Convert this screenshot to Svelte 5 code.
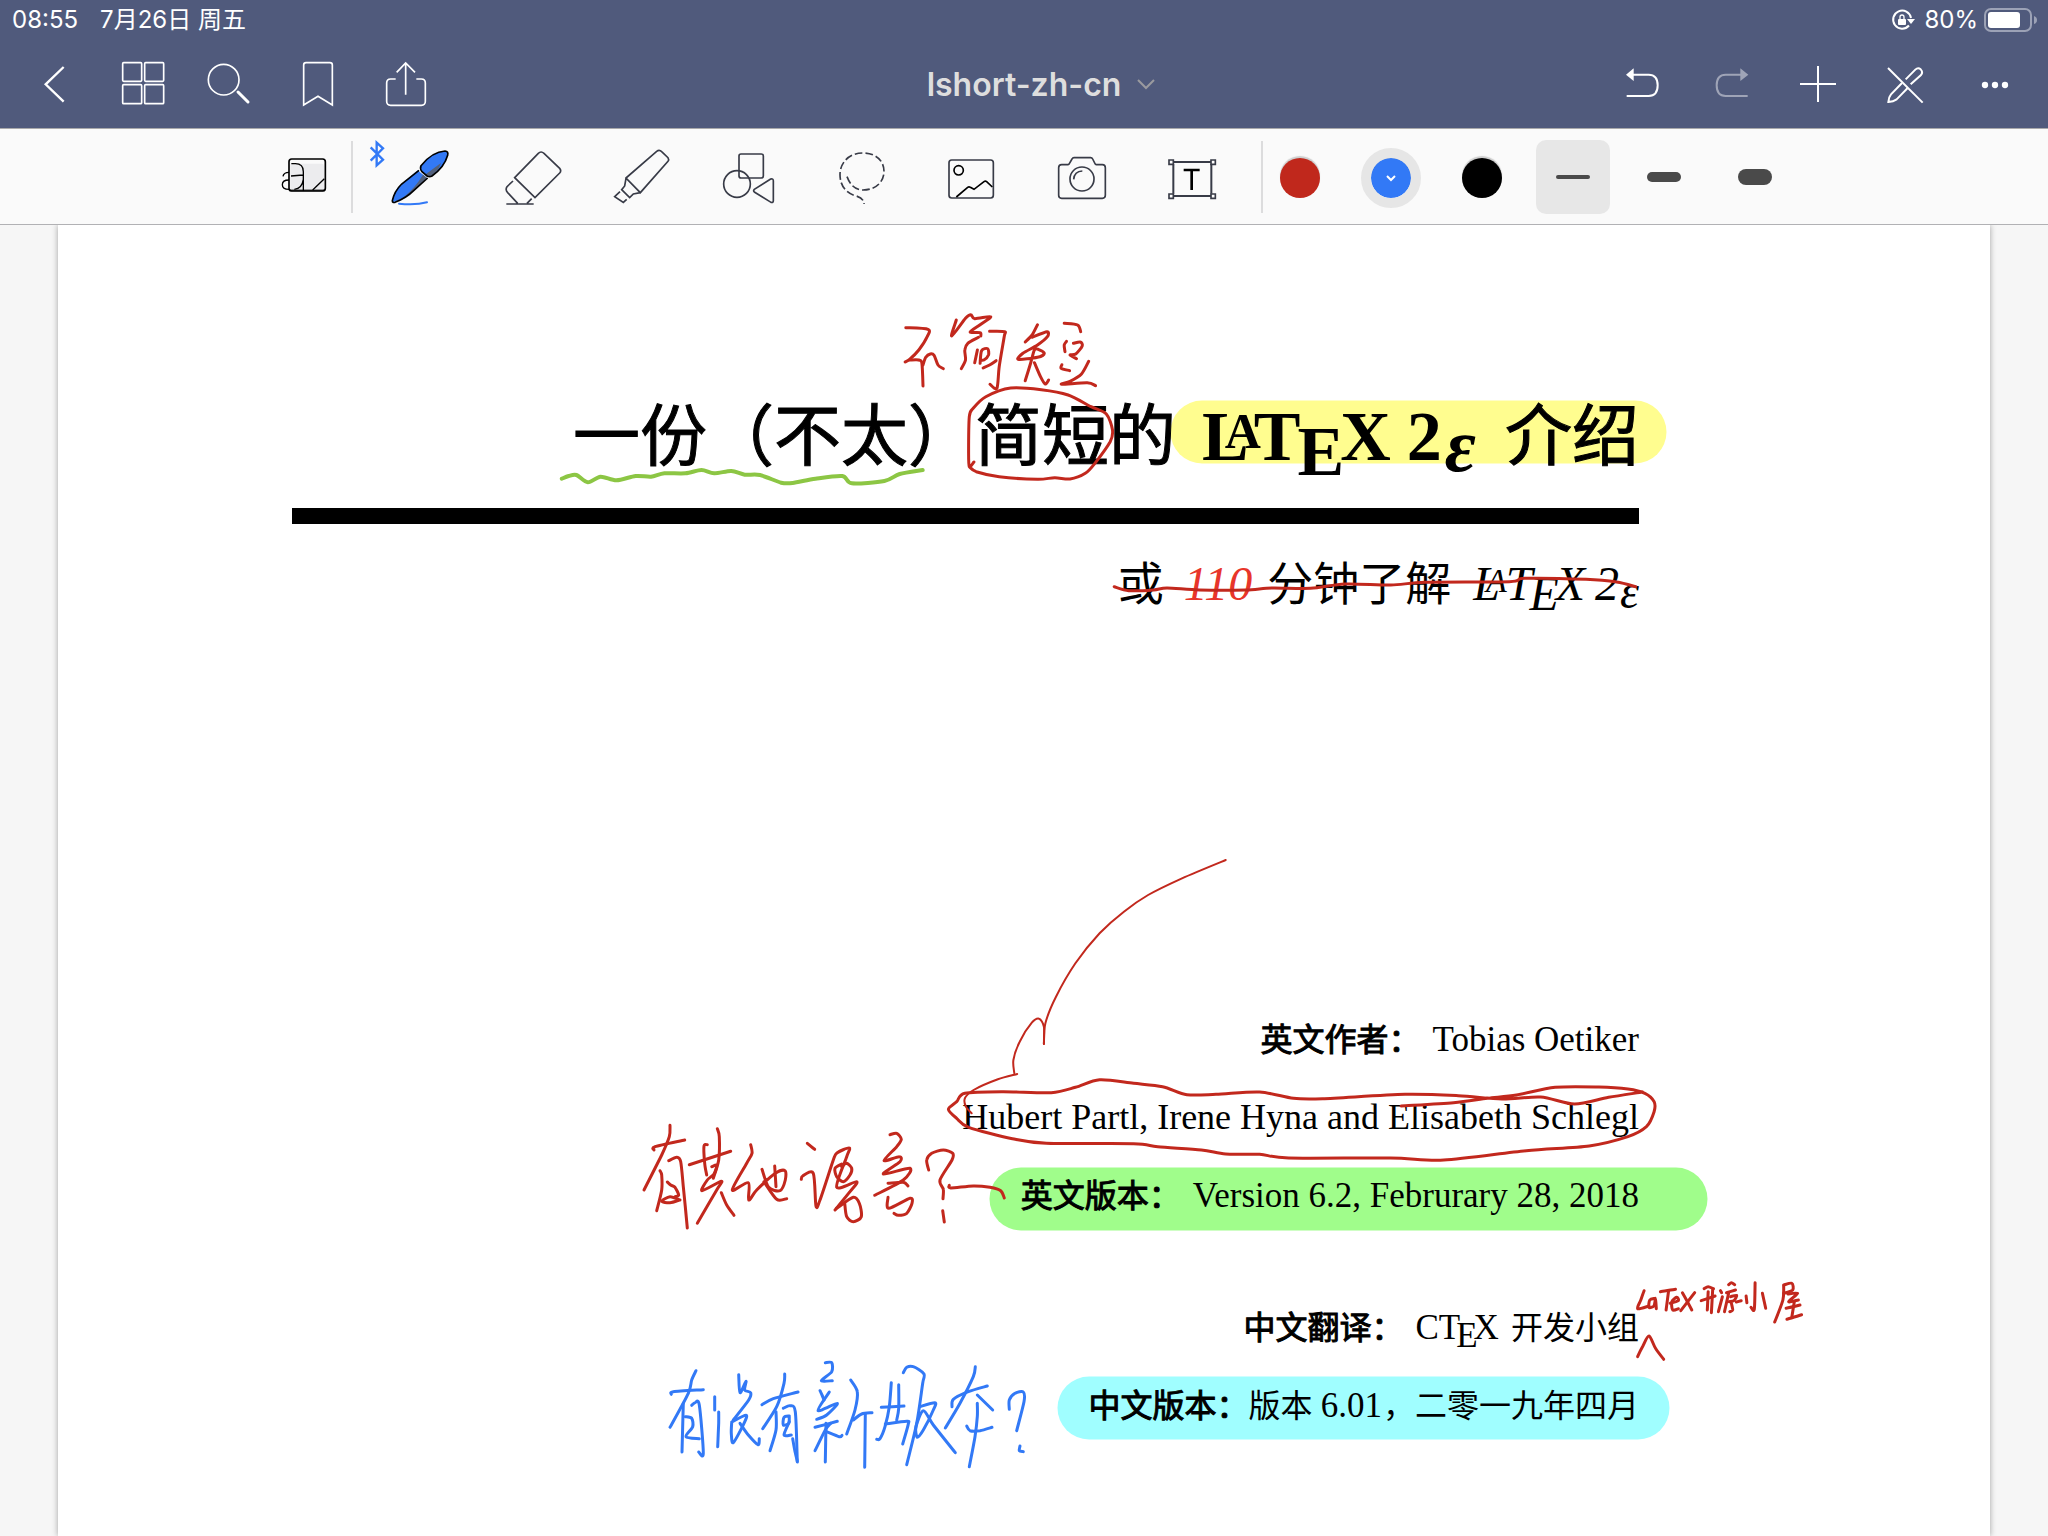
<script>
  const RED = '#c2281d';
  const BLUE = '#3279f6';
  const GREEN = '#8cc644';

  // Each note keeps its pen points in its own units: origin on the canvas plus units per pixel.
  const notes = [
    {
      label: '不简短', x: 540, y: 300, ux: 2.6133, uy: 3, color: RED, width: 3,
      strokes: [
        '956,83 1014,88 1012,110 990,150 966,178 954,186',
        '966,180 990,180 998,190 1001,258',
        '1001,195 1008,172 1020,162 1030,166 1040,195 1054,206',
        '1088,60 1076,108 1112,55 1126,44 1136,56 1178,50 1150,74 1124,96 1150,98 1152,108',
        '1146,112 1118,130 1110,150 1112,180 1101,206',
        '1175,94 1214,95 1213,110 1200,200 1194,265 1176,253',
        '1143,150 1136,188',
        '1150,190 1154,152 1170,146 1172,165 1160,180 1150,180',
        '1158,204 1175,195 1192,182',
        '1300,74 1286,105 1268,126',
        '1286,112 1325,95 1326,110 1300,135 1262,160 1250,178 1300,172 1318,160 1302,148 1292,150 1282,190 1268,242',
        '1292,188 1308,230 1320,252 1329,240',
        '1370,70 1405,75 1413,95',
        '1376,124 1370,135 1372,155',
        '1394,130 1412,126 1417,138 1400,162 1385,165 1402,176',
        '1364,194 1362,205 1384,212',
        '1434,184 1415,222 1385,244 1363,253 1430,248 1452,257'
      ]
    },
    {
      label: '圈出“简短”', x: 540, y: 300, ux: 2.6133, uy: 3, color: RED, width: 3,
      strokes: [
        '1134,486 1122,500 1120,460 1122,350 1132,325 1165,290 1230,264 1310,269 1380,285 1440,320 1480,342 1496,390 1490,425 1450,490 1425,520 1385,537 1345,533 1300,538 1200,530 1140,515 1122,500'
      ]
    },
    {
      label: '波浪下划线', x: 540, y: 300, ux: 2.6133, uy: 3, color: GREEN, width: 4,
      strokes: [
        '57,536 75,528 95,525 125,547 158,530 200,541 250,528 290,530 325,520 380,520 422,510 455,520 500,513 535,524 575,525 630,548 660,549 720,536 790,528 815,550 900,543 940,522 1000,510'
      ]
    },
    {
      label: '删除线', x: 1100, y: 380, ux: 2.6133, uy: 3, color: RED, width: 3,
      strokes: [
        '37,620 75,632 140,630 175,624 260,630 380,630 450,624 550,625 640,612 760,615 850,607 1070,605 1110,595 1270,598 1350,606 1400,620'
      ]
    },
    {
      label: '有其他语言？', x: 620, y: 1100, ux: 3, uy: 3, color: RED, width: 3,
      strokes: [
        '150,76 148,110 125,165 72,270',
        '102,150 105,140 194,120',
        '120,212 125,225 125,270 110,332',
        '146,182 170,172 182,185 190,260 202,384',
        '142,246 152,255 165,262 176,285 165,290',
        '180,300 150,290 125,304 150,308 178,300',
        '262,134 252,138 254,190 260,225',
        '292,86 298,110 296,180 280,235',
        '208,194 332,154',
        '275,200 290,196 282,222 262,240 246,272 304,244 290,270 232,370',
        '304,278 320,315 342,346',
        '392,134 396,160 380,190 337,270 385,248 386,300 410,270 466,220 495,212 496,240 480,272 446,262 426,208',
        '464,198 468,260',
        '432,245 470,298 500,296',
        '562,130 584,148',
        '544,238 548,228 580,220 588,318 600,300 640,180 652,158 688,144 680,170 650,262 710,245 690,275 645,330',
        '665,192 645,205 650,230 670,245 690,225 695,205 680,190 665,200',
        '650,325 700,292 718,310 724,350 700,365 680,350 674,310',
        '810,104 830,100 844,118 830,140 792,182 838,170 840,185 790,222 870,205 850,240 764,286',
        '804,250 850,247 864,258',
        '804,292 806,325 870,295 876,310 860,340 835,346 822,340',
        '926,210 920,180 935,160 970,150 998,160 996,180 960,240 970,268 969,296',
        '968,332 973,366',
        '988,256 992,264 1060,258 1110,262 1142,272 1153,294'
      ]
    },
    {
      label: '有没有新版本？', x: 640, y: 1340, ux: 3, uy: 3, color: BLUE, width: 3,
      strokes: [
        '168,92 155,120 145,160 90,262',
        '94,163 100,155 190,149',
        '130,190 126,336',
        '155,196 165,188 178,195 190,340 176,336',
        '136,230 155,235 158,260 138,290 178,296',
        '224,170 224,210',
        '236,216 236,250 233,320',
        '296,104 300,158 318,124 314,150 332,158 326,180 280,240',
        '275,246 318,226 312,250 280,308 274,280 275,248',
        '300,250 325,285 354,314 358,296',
        '434,102 432,130 410,200 368,266',
        '366,194 400,176 474,156',
        '408,215 408,270 390,332',
        '430,205 450,197 466,215 472,366',
        '458,296 464,330 472,364',
        '448,228 432,232 430,255 446,250 448,230',
        '448,245 432,285 454,285',
        '556,68 575,68 575,95 544,122 577,122',
        '540,152 546,165 552,180',
        '568,156 534,212 592,190 560,225 530,238',
        '525,262 592,244',
        '572,250 556,270 525,332',
        '558,250 556,366',
        '560,275 598,290 606,286',
        '632,120 652,155 645,210 620,282',
        '640,240 665,222 696,218',
        '676,222 674,382',
        '754,128 748,200 735,260 720,296 710,298',
        '776,134 776,205 770,240',
        '724,202 792,198',
        '736,252 800,244 805,252 788,312',
        '790,98 800,82 820,80 852,102 848,130 830,250 800,374',
        '840,200 885,188 880,210 850,270 832,292 828,260 850,212 880,255 946,338',
        '1006,80 1000,110 960,190 916,264',
        '936,200 940,178 985,155 1042,138',
        '1012,165 1058,210',
        '1012,190 1012,230 1005,290 988,380',
        '980,258 990,272 1020,272 1056,262',
        '1108,208 1108,180 1125,160 1150,156 1152,185 1130,272',
        '1140,318 1138,332 1150,335'
      ]
    },
    {
      label: 'LaTeX 开源小屋', x: 1200, y: 1260, ux: 2.45, uy: 3, color: RED, width: 3,
      strokes: [
        '1088,92 1080,120 1072,146 1100,138',
        '1115,115 1102,120 1100,142 1112,138 1116,118 1118,146',
        '1128,95 1165,88', '1148,92 1142,150',
        '1152,130 1172,122 1168,112 1156,125 1158,150 1172,146',
        '1182,98 1205,150', '1212,98 1178,152',
        '1235,86 1245,80 1258,86', '1228,122 1262,108', '1245,95 1243,150', '1256,88 1253,158',
        '1275,92 1278,98', '1280,110 1270,155', '1295,74 1302,68 1310,74', '1290,98 1312,90',
        '1295,100 1285,155', '1300,110 1315,106 1308,122 1296,125', '1302,130 1305,150 1298,155', '1326,122 1314,126',
        '1360,68 1358,148 1350,142', '1338,108 1340,128', '1378,100 1386,145',
        '1430,75 1450,70 1452,90 1430,100', '1430,78 1428,120 1408,186',
        '1440,102 1464,100 1442,125 1466,120', '1436,145 1470,135', '1456,125 1450,172', '1438,178 1474,164'
      ]
    },
    {
      label: '插入符', x: 1200, y: 1260, ux: 2.45, uy: 3, color: RED, width: 3,
      strokes: ['1072,290 1085,258 1100,228 1116,265 1136,298']
    },
    {
      label: '引线', x: 930, y: 840, ux: 2.0632, uy: 3, color: RED, width: 2,
      strokes: [
        '610,60 520,115 450,165 400,215 350,280 300,370 260,470 238,550 235,612',
        '235,612 235,560 225,536 210,548 185,605 172,660 174,700',
        '180,702 140,718 90,750 72,775 74,800 86,820'
      ]
    },
    {
      label: '圈出作者', x: 930, y: 840, ux: 2.0632, uy: 3, color: RED, width: 3,
      strokes: [
        '972,798 1080,788 1150,775 1210,765 1290,742 1380,741 1440,747 1475,760 1494,785 1494,815 1478,860 1440,890 1360,918 1230,932 1060,960 950,954 740,954 680,943 610,942 560,930 470,920 420,911 240,910 170,896 80,862 55,835 38,808 55,785 72,760 150,755 250,758 300,742 350,719 420,730 480,740 530,764 590,763 680,756 750,775 810,776 980,763 1090,767 1180,777 1260,771 1330,792 1400,772 1470,756'
      ]
    }
  ];

  // Smooths the pen points into one curve.
  function trace(stroke, note) {
    const p = stroke.split(' ').map((pair) => {
      const [a, b] = pair.split(',').map(Number);
      return [note.x + a / note.ux, note.y + b / note.uy];
    });
    const f = (n) => n.toFixed(1);
    let d = `M${f(p[0][0])} ${f(p[0][1])}`;
    for (let i = 0; i < p.length - 1; i++) {
      const a = p[i - 1] ?? p[i], b = p[i], c = p[i + 1], e = p[i + 2] ?? c;
      const k = 7;
      d += `C${f(b[0] + (c[0] - a[0]) / k)} ${f(b[1] + (c[1] - a[1]) / k)} ${f(c[0] - (e[0] - b[0]) / k)} ${f(c[1] - (e[1] - b[1]) / k)} ${f(c[0])} ${f(c[1])}`;
    }
    return d;
  }

  const tools = ['pen', 'eraser', 'highlighter', 'shapes', 'lasso', 'image', 'camera', 'text'];
  const toolNames = ['钢笔', '橡皮擦', '荧光笔', '形状', '套索', '图片', '相机', '文本'];
  let tool = $state('pen');
  let color = $state('blue');
  let nib = $state('thin');
</script>

{#snippet latex()}<span class="latex"><span>L</span><span class="la">A</span><span class="lt">T</span><span class="le">E</span><span class="lx">X</span><span class="l2">2</span><span class="leps">ε</span></span>{/snippet}

<div class="app">
  <header>
    <div class="status">
      <time>08:55</time>
      <span class="date">7月26日 周五</span>
      <span class="spacer"></span>
      <svg class="lock" viewBox="0 0 24 24" aria-label="方向锁定">
        <path d="M20 10A9 9 0 1 0 18 17.500" fill="none" stroke="#fff" stroke-width="2" />
        <path d="M16 11h8l-4 5z" fill="#fff" />
        <rect x="7" y="11" width="8" height="6" rx="1" fill="#fff" />
        <path d="M9 11V9a2 2 0 0 1 4 0V11" fill="none" stroke="#fff" stroke-width="1.300" />
      </svg>
      <span class="charge">80%</span>
      <svg class="battery" viewBox="0 0 54 24" aria-label="电量">
        <rect x="1" y="1" width="46" height="22" rx="6" fill="none" stroke="#9ca2b6" stroke-width="2" />
        <rect x="4" y="4" width="32" height="16" rx="3" fill="#fff" />
        <path d="M50 8q3 1 3 4t-3 4z" fill="#9ca2b6" />
      </svg>
    </div>
    <nav>
      <div class="side">
        <button aria-label="返回"><svg viewBox="90 180 144 144"><path d="M191 201L137 253L191 305" stroke-width="7" /></svg></button>
        <button aria-label="缩略图"><svg viewBox="354 180 144 144"><rect x="368" y="188" width="57" height="56" rx="3" /><rect x="434" y="188" width="57" height="56" rx="3" /><rect x="368" y="254" width="57" height="57" rx="3" /><rect x="434" y="254" width="57" height="57" rx="3" /></svg></button>
        <button aria-label="搜索"><svg viewBox="618 180 144 144"><circle cx="671" cy="239" r="46" /><path d="M714 276L744 306" stroke-width="9" stroke-linecap="round" /></svg></button>
        <button aria-label="书签"><svg viewBox="882 180 144 144"><path d="M911 315V195q0-7 7-7h72q7 0 7 7V315L954 289Z" /></svg></button>
        <button aria-label="分享"><svg viewBox="1146 180 144 144"><path d="M1187 237h-15q-12 0-12 12v55q0 12 12 12h92q12 0 12-12v-55q0-12-12-12h-15M1217 284V190M1190 217L1217 189L1245 217" /></svg></button>
      </div>
      <button class="title"><span>lshort-zh-cn</span><svg viewBox="0 0 18 12"><path d="M1 2l8 8l8-8" /></svg></button>
      <div class="side">
        <button aria-label="撤销"><svg viewBox="174 180 144 144"><path d="M200 288H266q27 0 27-32t-27-32H218" stroke-width="6" /><path class="solid" d="M198 224L221 205V243Z" /></svg></button>
        <button aria-label="重做" class="dim"><svg viewBox="438 180 144 144"><path d="M563 288H497q-27 0-27-32t27-32H545" stroke-width="6" /><path class="solid" d="M565 224L541 205V243Z" /></svg></button>
        <button aria-label="添加"><svg viewBox="702 180 144 144"><path d="M720 252H828M774 198V306" stroke-width="6" /></svg></button>
        <button aria-label="只读模式"><svg viewBox="966 180 144 144"><path d="M984 204L1088 308" stroke-width="6" /><path d="M1037 238L1066 209q8-8 16-1q8 8 1 17L1052 253M1026 249L993 283q-7 8-8 23q15-1 25-8L1043 264" stroke-width="6" /></svg></button>
        <button aria-label="更多"><svg viewBox="1230 180 144 144"><g class="solid"><circle cx="1275" cy="255" r="9.500" /><circle cx="1305" cy="255" r="9.500" /><circle cx="1335" cy="255" r="9.500" /></g></svg></button>
      </div>
    </nav>
  </header>

  <div class="toolbar" role="toolbar" aria-label="工具">
    <button class="zoom" aria-label="缩放窗口">
      <svg viewBox="18 51 180 180">
        <path d="M64 101h94q7 0 7 7v72H64z" fill="#ececee" />
        <path d="M61 181h106" stroke="#444" stroke-width="5" />
        <rect x="60" y="87" width="109" height="96" rx="8" stroke="#000" stroke-width="5" />
        <path d="M131 180L166 146M67 101h12q24 0 24 24v58M66 138l36-3M103 148q-4 28-27 30M60 127q-16 0-18 12M60 150q-20 0-20 14q0 14 20 14" stroke="#000" stroke-width="4" />
      </svg>
    </button>
    <div class="rule"></div>
    <div class="tools">
      {#each tools as id, i}
        <button aria-label={toolNames[i]} aria-pressed={tool === id} onclick={() => (tool = id)}>
          {#if id === 'pen'}
            <svg viewBox="363 51 180 180">
              <path d="M305 52L342 89L323 106V38L342 55L305 92" stroke="#3279f6" stroke-width="7" />
              <path d="M370 212Q374 182 398 162L446 121L474 144L434 182Q406 206 372 217Z" fill="#3279f6" />
              <path d="M462 134L474 144L434 182L402 203Q440 172 462 134Z" fill="#53617c" />
              <path d="M456 107Q490 65 528 63Q539 64 536 76Q526 112 489 138Q482 142 474 138L459 125Q452 116 456 107Z" fill="#3279f6" />
              <path d="M516 99L468 134Q480 142 489 138Q508 124 516 99Z" fill="#53617c" />
              <path d="M456 107Q490 65 528 63Q539 64 536 76Q526 112 489 138Q482 142 474 138L459 125Q452 116 456 107ZM450 121L398 162Q376 184 370 212Q370 219 378 217Q412 204 434 182L476 144" stroke="#000" stroke-width="5" />
              <path d="M390 221Q440 226 474 217" stroke="#3279f6" stroke-width="6" stroke-linecap="round" />
            </svg>
          {:else if id === 'eraser'}
            <svg viewBox="693 51 180 180"><path d="M737 143L808 70q8-8 17 0L872 115q6 7 0 14L798 203ZM732 153L714 170q-6 9 2 18L746 220M712 222H794M774 220L788 206" /></svg>
          {:else if id === 'highlighter'}
            <svg viewBox="1023 51 180 180"><path d="M1071 144L1163 64q8-6 15 1L1197 83q4 6 0 11L1114 188ZM1071 145L1067 168L1058 179L1082 203L1093 192L1114 188M1053 185L1037 200L1063 217L1073 208" /></svg>
          {:else if id === 'shapes'}
            <svg viewBox="1353 51 180 180"><rect x="1410" y="72" width="73" height="72" rx="6" /><circle cx="1404" cy="162" r="40" /><path d="M1505 147L1456 178q-4 4 0 8L1506 217q7 2 7-5V152q0-7-8-5Z" /></svg>
          {:else if id === 'lasso'}
            <svg viewBox="153 51 180 180"><path d="M204 140C213 164 228 180 252 180C292 180 315 154 315 124C315 90 288 69 252 69C212 69 183 96 183 134C183 168 202 190 232 198Q255 205 255 222" stroke-dasharray="23 9" /></svg>
          {:else if id === 'image'}
            <svg viewBox="483 51 180 180"><rect x="510" y="90" width="133" height="114" rx="8" /><path class="dark" d="M532 201L566 172q4-3 8 0L585 178L615 155q4-3 8 0L640 171" /><circle class="dark" cx="539" cy="121" r="14" /></svg>
          {:else if id === 'camera'}
            <svg viewBox="813 51 180 180"><path d="M848 104H867q3 0 5-5L879 87q2-4 6-4H935q4 0 6 4L947 99q2 5 5 5H970q9 0 9 9V196q0 9-9 9H848q-9 0-9-9V113q0-9 9-9Z" /><circle cx="909" cy="147" r="36" /><path d="M884 148q2-24 26-25" /></svg>
          {:else}
            <svg viewBox="1143 51 180 180"><path d="M1183 103V191M1297 103V191M1183 96H1297M1183 198H1297" stroke-width="6" /><path d="M1170 90h13v13h-13zM1296 90h13v13h-13zM1170 192h13v13h-13zM1296 192h13v13h-13z" fill="#fff" /><path class="dark" d="M1214 120H1262M1238 120V180" stroke-width="8" /></svg>
          {/if}
        </button>
      {/each}
    </div>
    <div class="rule"></div>
    <div class="presets">
      {#each ['red', 'blue', 'black'] as c}
        <button class="swatch {c}" class:on={color === c} aria-label={c} aria-pressed={color === c} onclick={() => (color = c)}>
          <span>{#if color === c}<svg viewBox="0 0 12 8"><path d="M2 2l4 4l4-4" /></svg>{/if}</span>
        </button>
      {/each}
      {#each ['thin', 'medium', 'thick'] as n}
        <button class="nib {n}" class:on={nib === n} aria-label={n} aria-pressed={nib === n} onclick={() => (nib = n)}><span></span></button>
      {/each}
    </div>
  </div>

  <main>
    <article>
      <svg class="layer" viewBox="58 225 1932 1311" preserveAspectRatio="xMaxYMin meet" aria-hidden="true">
        <g fill="none" stroke-width="63" stroke-linecap="round">
          <path d="M1202 432H1635" stroke="#fffd8f" />
          <path d="M1021 1199H1676" stroke="#a0fd8b" />
          <path d="M1089 1408H1638" stroke="#a0feff" />
        </g>
      </svg>

      <div class="text">
        <h1>一份（不太）简短的{@render latex()}介绍</h1>
        <hr />
        <p class="sub">或<a href="#minutes">110</a>分钟了解{@render latex()}</p>
        <div class="credits">
          <p><strong>英文作者：</strong><span class="latin">Tobias Oetiker</span></p>
          <p><span class="latin names">Hubert Partl, Irene Hyna and Elisabeth Schlegl</span></p>
          <p><strong>英文版本：</strong><span class="latin">Version 6.2, Februrary 28, 2018</span></p>
        </div>
        <div class="credits">
          <p><strong>中文翻译：</strong><span class="latin group">CT<span class="drop">E</span>X</span> 开发小组</p>
          <p><strong class="tight">中文版本：</strong>版本 <span class="num">6.01</span>，二零一九年四月</p>
        </div>
      </div>

      <svg class="layer" viewBox="58 225 1932 1311" preserveAspectRatio="xMaxYMin meet">
        {#each notes as note}
          <g role="img" aria-label={note.label} fill="none" stroke={note.color} stroke-width={note.width} stroke-linecap="round" stroke-linejoin="round">
            {#each note.strokes as s}<path d={trace(s, note)} />{/each}
          </g>
        {/each}
      </svg>
    </article>
  </main>
</div>

<style>
  :global(body) { margin: 0; background: #f6f6f6; }
  .app { min-height: 100vh; display: flex; flex-direction: column; font-family: Inter, "Noto Sans CJK SC", sans-serif; color: #000; }
  button { border: 0; padding: 0; margin: 0; background: none; font: inherit; color: inherit; display: flex; align-items: center; justify-content: center; }
  svg { display: block; overflow: visible; }

  header { background: #505a7c; color: #fff; border-bottom: 1px solid #a9a9ab; }
  .status { height: 40px; padding: 0 10px 0 12px; display: flex; align-items: center; font-size: 24px; line-height: 40px; }
  .date { margin-left: 22px; }
  .spacer { flex: 1; }
  .lock { width: 24px; height: 24px; }
  .charge { margin: 0 6px 0 9px; }
  .battery { width: 54px; height: 24px; }

  nav { height: 88px; padding: 0 10px; display: flex; align-items: center; justify-content: space-between; }
  .side { display: flex; }
  .side button { width: 88px; height: 88px; }
  .side svg { width: 48px; height: 48px; fill: none; stroke: #fff; stroke-width: 5; }
  .side .solid { fill: #fff; stroke: none; }
  .dim { opacity: 0.45; }
  .title { flex: 1; gap: 16px; padding-left: 34px; font-size: 32px; font-weight: 600; color: #dedede; }
  .title svg { width: 18px; height: 12px; fill: none; stroke: #9a9a9f; stroke-width: 2; }

  .toolbar { height: 95px; padding-left: 2px; background: #fafafa; border-bottom: 1px solid #b1b1b4; display: flex; align-items: center; justify-content: center; position: relative; z-index: 1; }
  .toolbar svg { fill: none; stroke: #383b47; stroke-width: 5; }
  .zoom { width: 92px; height: 95px; }
  .zoom svg, .tools svg { width: 60px; height: 60px; }
  .zoom path:first-child { stroke: none; }
  .rule { width: 2px; height: 72px; background: #dcdcdd; }
  .tools { display: flex; margin: 0 16px 0 12px; }
  .tools button { width: 110px; height: 95px; }
  .tools [fill^="#3"], .tools [fill^="#5"] { stroke: none; }
  .dark { stroke: #000; }
  .presets { display: flex; align-items: center; gap: 17px; }
  .presets button { width: 74px; height: 74px; border-radius: 10px; }
  .presets .swatch { box-sizing: border-box; padding-top: 2px; }
  .swatch span { width: 40px; height: 40px; border-radius: 50%; display: flex; align-items: center; justify-content: center; box-shadow: 0 -2px 1px #0000002e; }
  .swatch svg { width: 12px; height: 8px; stroke: #fff; stroke-width: 2; }
  .red span { background: #c0281c; }
  .blue span { background: #3279f6; }
  .black span { background: #000; }
  .swatch.on span { outline: 10px solid #e6e6e6; }
  .nib.on { background: #e7e7e7; }
  .nib span { width: 34px; border-radius: 8px; background: #4a4a4a; }
  .thin span { height: 4px; }
  .medium span { height: 10px; }
  .thick span { height: 16px; }

  main { flex: 1; display: flex; padding: 0 58px; }
  article { flex: 1; position: relative; background: #fff; box-shadow: 0 0 6px #00000059; font-family: "Noto Sans CJK SC", sans-serif; }
  .layer { position: absolute; top: 0; left: 0; width: 100%; pointer-events: none; }
  .text { position: relative; padding: 158px 351px 60px 234px; text-align: right; }
  h1, p { margin: 0; }
  h1 { font-size: 67px; line-height: 96px; font-weight: 400; -webkit-text-stroke: 1px #000; white-space: nowrap; }
  hr { margin: 29px 0 24px; border: 0; height: 16px; background: #000; }
  .sub { font-size: 46px; line-height: 64px; }
  .sub a { font-family: "Liberation Serif", serif; font-size: 48px; font-style: italic; color: #e8352a; text-decoration: none; margin: 0 15px 0 20px; line-height: 0; }
  .credits { font-size: 32px; line-height: 78px; margin-top: 54px; }
  .sub + .credits { margin-top: 386px; }
  .credits strong { font-weight: 400; -webkit-text-stroke: 1px #000; margin-right: 12px; }
  .credits .tight { margin-right: 0; }
  .latin, .num { font-family: "Liberation Serif", serif; font-size: 35px; line-height: 0; }
  .names { font-size: 36px; }
  .group { margin-right: 5px; }
  .num { margin: 0 1px; }
  .drop { display: inline-block; vertical-align: -8px; margin: 0 -4px; }

  .latex { font-family: "Liberation Serif", serif; line-height: 0; margin: 0 29px 0 26px; }
  h1 .latex { font-size: 70px; font-weight: 700; -webkit-text-stroke: 0; }
  .sub .latex { font-size: 48px; font-style: italic; margin: 0 0 0 22px; }
  .la { font-size: 50px; vertical-align: 12px; margin: 0 -7px 0 -24px; }
  .le { vertical-align: -15px; margin: 0 -4px 0 -3px; }
  .l2 { margin: 0 3px 0 16px; }
  h1 .leps { font-size: 76px; }
  .leps { font-style: italic; vertical-align: -11px; }
  .sub .la { font-size: 34px; vertical-align: 8px; margin: 0 -1px 0 -14px; }
  .sub .le { vertical-align: -10px; margin: 0 -3px 0 -3px; }
  .sub .l2 { margin: 0 1px 0 10px; }
  .sub .leps { vertical-align: -8px; }
</style>
